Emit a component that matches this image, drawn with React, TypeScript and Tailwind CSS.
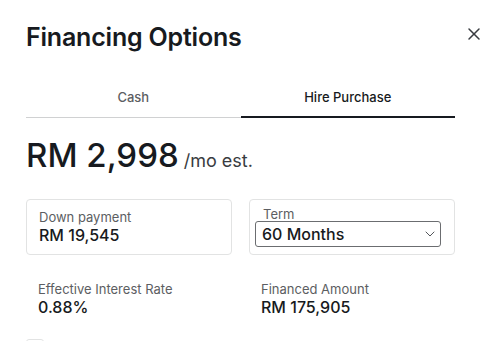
import { X, ChevronDown } from "lucide-react";

const font = { fontFamily: "Inter, 'Liberation Sans', sans-serif" };

function Stat({ label, value }: { label: string; value: string }) {
  return (
    <div className="flex flex-col px-3">
      <span className="text-[13px] leading-4 text-[#5c5e62]">{label}</span>
      <span className="text-[16px] font-medium leading-5 text-[#171a20]">{value}</span>
    </div>
  );
}

export default function App() {
  return (
    <div className="relative h-[341px] w-[500px] overflow-hidden bg-white" style={font}>
      <button className="absolute left-[464px] top-[24px] text-[#393c41]">
        <X size={20} strokeWidth={1.8} />
      </button>

      <div className="flex w-[455px] flex-col pl-[26px]">
        <h1 className="mt-[22px] text-[25px] font-semibold leading-[30px] tracking-[-0.2px] text-[#171a20]">
          Financing Options
        </h1>

        <div className="mt-[37px] grid grid-cols-2">
          <div className="border-b border-[#d0d1d2] pb-[12px] text-center text-[13px] font-medium leading-4 text-[#5c5e62]">
            Cash
          </div>
          <div className="border-b-2 border-[#171a20] pb-[11px] text-center text-[13px] font-medium leading-4 text-[#171a20]">
            Hire Purchase
          </div>
        </div>

        <div className="mt-[19px] flex items-baseline gap-[5px] text-[#171a20]">
          <span className="text-[33px] font-medium leading-9">RM 2,998</span>
          <span className="text-[18px] leading-5 text-[#393c41]">/mo est.</span>
        </div>

        <div className="mt-[26px] grid grid-cols-2 gap-[17px]">
          <div className="flex h-[56px] flex-col justify-center rounded-[4px] border border-[#e2e3e3] px-3">
            <span className="text-[13px] leading-4 text-[#5c5e62]">Down payment</span>
            <span className="text-[16px] font-medium leading-5 text-[#171a20]">RM 19,545</span>
          </div>
          <div className="flex h-[56px] flex-col justify-center rounded-[4px] border border-[#e2e3e3] pl-[5px] pr-[13px]">
            <span className="ml-[8px] text-[13px] leading-[13px] text-[#5c5e62]">Term</span>
            <div className="flex h-[26px] items-center justify-between rounded-[3px] border-[1.5px] border-[#6b6d70] pl-[6px] pr-[2px]">
              <span className="text-[16px] font-medium text-[#171a20]">60 Months</span>
              <ChevronDown size={16} strokeWidth={1.3} className="text-[#393c41]" />
            </div>
          </div>
        </div>

        <div className="mt-[26px] grid grid-cols-2 gap-[17px]">
          <Stat label="Effective Interest Rate" value="0.88%" />
          <Stat label="Financed Amount" value="RM 175,905" />
        </div>

        <div className="mt-[22px] h-[18px] w-[18px] rounded-[3px] border border-[#e2e3e3]" />
      </div>
    </div>
  );
}
